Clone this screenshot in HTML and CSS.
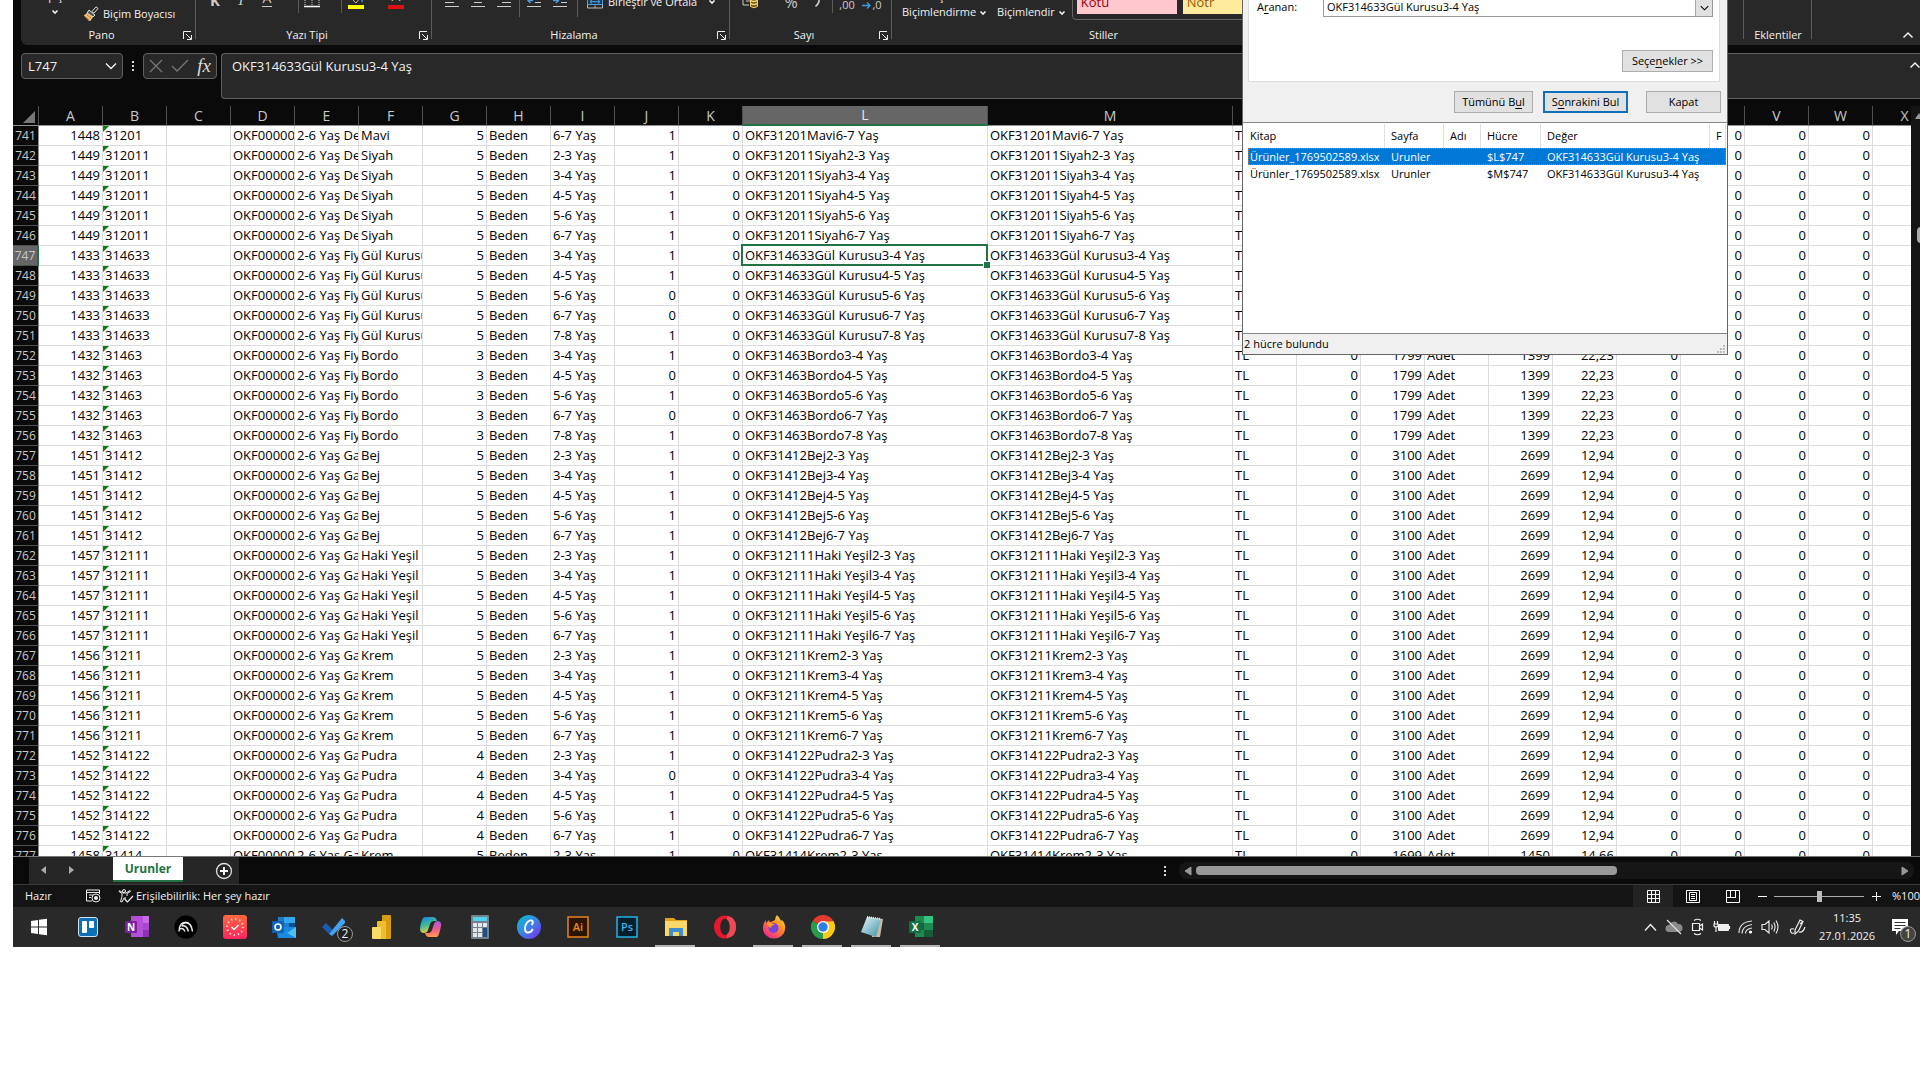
FILE: index.html
```html
<!DOCTYPE html>
<html lang="tr">
<head>
<meta charset="utf-8">
<title>Ürünler_1769502589.xlsx - Excel</title>
<link rel="stylesheet" href="styles.css">
</head>
<body>
<svg class="defs" aria-hidden="true">
  <symbol id="caret" viewBox="0 0 8 6"><path d="M1.5 1.5 4 4 6.500 1.500" fill="none" stroke="currentColor" stroke-width="1.600"/></symbol>
  <symbol id="chevron" viewBox="0 0 12 8"><path d="M1 1.500 6 6.500 11 1.500" fill="none" stroke="currentColor" stroke-width="1.400"/></symbol>
  <symbol id="chevron-up" viewBox="0 0 12 8"><path d="M1.500 6.500 6 2 10.500 6.500" fill="none" stroke="currentColor" stroke-width="1.500"/></symbol>
  <symbol id="launcher" viewBox="0 0 9 9"><path d="M.5 8V.5H8M3 3l5 5M8.500 4v4.500H4" fill="none" stroke="currentColor"/></symbol>
</svg>
<div class="desktop">
  <main class="excel">
    <div class="ribbon">
      <section class="group group-clipboard">
        <div class="tools">
          <button class="paste">Yapıştır<svg class="caret"><use href="#caret"/></svg></button>
          <button class="painter">
            <svg width="16" height="16" viewBox="0 0 16 16"><path d="M9 5.500 13 .8l2 1.700-4 4.700z" fill="none" stroke="#ddd"/><path d="m6 4 6 5-2 2-6-4z" fill="#555" stroke="#ddd"/><path d="M4 7 .8 9.500 6 15l1.500-.3L10 11z" fill="#f3c27a"/><path d="M2 10.500 6.500 14M4 9l4 3" stroke="#b87a2c"/></svg>
            Biçim Boyacısı</button>
        </div>
        <footer class="group-label with-launch">Pano<button class="launch" aria-label="Pano ayarları"><svg><use href="#launcher"/></svg></button></footer>
      </section>
      <section class="group group-font">
        <div class="tools">
          <button class="t26 bold">K</button><button class="t26 italic">T</button><button class="t26 under"><span>A</span></button>
          <button class="t14" aria-label="Alt çizgi türü"><svg class="caret"><use href="#caret"/></svg></button>
          <i class="sep s8"></i>
          <button class="t20" aria-label="Kenarlık"><svg width="16" height="20" viewBox="0 0 16 20"><path d="M1 2v15M15 2v15M8 2v15M1 11h14" stroke="#ccc" stroke-dasharray="1 1" fill="none"/><path d="M0 18.500h16" stroke="#fff" stroke-width="1.500"/></svg></button>
          <button class="t16" aria-label="Kenarlık türü"><svg class="caret"><use href="#caret"/></svg></button>
          <i class="sep s6"></i>
          <button class="t24" aria-label="Dolgu rengi"><svg width="16" height="22" viewBox="0 0 16 22"><path d="m3 11 5-6 5 5-5 6z" fill="none" stroke="#bbb"/><path d="M12 8q3 2 2 7" stroke="#4a90c8" stroke-width="1.500" fill="none"/><path d="M0 18h16v4H0z" fill="#ff0"/></svg></button>
          <button class="t16" aria-label="Dolgu renkleri"><svg class="caret"><use href="#caret"/></svg></button>
          <button class="t24 fontcolor"><span>A</span></button>
          <button class="t16" aria-label="Yazı renkleri"><svg class="caret"><use href="#caret"/></svg></button>
        </div>
        <footer class="group-label with-launch">Yazı Tipi<button class="launch" aria-label="Yazı tipi ayarları"><svg><use href="#launcher"/></svg></button></footer>
      </section>
      <section class="group group-align">
        <div class="tools low">
          <button class="t26" aria-label="Sola hizala"><svg width="14" height="16" viewBox="0 0 14 16"><path d="M0 4.500h14M0 8.500h9M0 12.500h14" stroke="#ccc"/></svg></button>
          <button class="t26" aria-label="Ortala"><svg width="14" height="16" viewBox="0 0 14 16"><path d="M0 4.500h14M3 8.500h8M0 12.500h14" stroke="#ccc"/></svg></button>
          <button class="t26" aria-label="Sağa hizala"><svg width="14" height="16" viewBox="0 0 14 16"><path d="M0 4.500h14M5 8.500h9M0 12.500h14" stroke="#ccc"/></svg></button>
          <i class="sep s4"></i>
          <button class="t26" aria-label="Girintiyi azalt"><svg width="14" height="16" viewBox="0 0 14 16"><path d="M8 4.500h6M8 8.500h6M0 12.500h14" stroke="#ccc"/><path d="M6 6.500H1M3.500 4 1 6.500 3.500 9" stroke="#4aa0dc" stroke-width="1.400" fill="none"/></svg></button>
          <button class="t26" aria-label="Girintiyi artır"><svg width="14" height="16" viewBox="0 0 14 16"><path d="M8 4.500h6M8 8.500h6M0 12.500h14" stroke="#ccc"/><path d="M0 6.500h5M3 4l2.500 2.500L3 9" stroke="#4aa0dc" stroke-width="1.400" fill="none"/></svg></button>
          <i class="sep s8"></i>
          <button class="merge"><svg width="16" height="14" viewBox="0 0 16 14"><path d="M.5.5h15v12.500H.5zM8 0v3M8 10.500V13" fill="none" stroke="#bbb"/><path d="M.5 4h15v5.500H.5z" fill="#1c3a50" stroke="#4aa0dc"/><path d="M3 6.700h10M5 5 3 6.700 5 8.500M11 5l2 1.700-2 1.800" fill="none" stroke="#4aa0dc"/></svg>Birleştir ve Ortala<svg class="caret"><use href="#caret"/></svg></button>
        </div>
        <footer class="group-label with-launch">Hizalama<button class="launch" aria-label="Hizalama ayarları"><svg><use href="#launcher"/></svg></button></footer>
      </section>
      <section class="group group-number">
        <div class="tools">
          <button class="t24" aria-label="Para birimi"><svg width="16" height="22" viewBox="0 0 16 22"><path d="M1 4v14h6M4 14h4" stroke="#ccc" fill="none"/><path d="M8.500 10h7v9.500q-3.500 2.500-7 0z" fill="#6b5420" stroke="#f5cf6b"/><path d="M8.500 13.500q3.500 2 7 0M8.500 16.500q3.500 2 7 0" stroke="#f5cf6b" stroke-width="1.500" fill="none"/></svg></button>
          <button class="t16" aria-label="Para birimleri"><svg class="caret"><use href="#caret"/></svg></button>
          <button class="t26 sign">%</button>
          <button class="t26 sign" aria-label="Virgül stili"><svg width="8" height="14" viewBox="0 0 8 14"><path d="M5 2.500q3 4-2.500 9" fill="none" stroke="#ccc" stroke-width="1.600"/></svg></button>
          <i class="sep s4"></i>
          <button class="t26 decimal">,00</button>
          <button class="t24 decimal"><svg width="10" height="9" viewBox="0 0 10 9"><path d="M0 4.500h8M5 1.500l3 3-3 3" fill="none" stroke="#3f9be0" stroke-width="1.400"/></svg>,0</button>
        </div>
        <footer class="group-label with-launch">Sayı<button class="launch" aria-label="Sayı ayarları"><svg><use href="#launcher"/></svg></button></footer>
      </section>
      <section class="group group-styles">
        <div class="tools">
          <button class="style-menu">Koşullu<br>Biçimlendirme <svg class="caret"><use href="#caret"/></svg></button>
          <button class="style-menu">Tablo Olarak<br>Biçimlendir <svg class="caret"><use href="#caret"/></svg></button>
          <div class="gallery"><button class="bad">Kötü</button><button class="neutral">Nötr</button></div>
        </div>
        <footer class="group-label">Stiller</footer>
      </section>
      <section class="group group-addins"><footer class="group-label">Eklentiler</footer></section>
      <button class="collapse" aria-label="Şeridi daralt"><svg><use href="#chevron-up"/></svg></button>
    </div>

    <div class="formula-row">
      <div class="namebox"><input aria-label="Ad kutusu" value="L747"><svg><use href="#chevron"/></svg></div>
      <span class="dots"><i></i><i></i><i></i></span>
      <div class="fx">
        <button aria-label="İptal"><svg width="14" height="14" viewBox="0 0 14 14"><path d="m1 1 12 12M13 1 1 13" stroke="#777" stroke-width="1.300"/></svg></button>
        <button aria-label="Gir"><svg width="18" height="14" viewBox="0 0 18 14"><path d="m1 7 5 5L17 1" stroke="#777" stroke-width="1.300" fill="none"/></svg></button>
        <button class="fx-sign">fx</button>
      </div>
      <div class="formula"><input aria-label="Formül çubuğu" value="OKF314633Gül Kurusu3-4 Yaş"><svg><use href="#chevron-up"/></svg></div>
    </div>

    <div class="sheet">
      <div class="grid">
        <table class="cells">
          <colgroup><col class="c-head"><col span="11" class="c-std"><col span="2" class="c-wide"><col span="11" class="c-std"></colgroup>
          <thead><tr id="letters"><th class="corner"><svg width="12" height="12" viewBox="0 0 12 12"><path d="M12 0v12H0z" fill="#777"/></svg></th></tr></thead>
          <tbody id="rows"></tbody>
        </table>
      </div>
      <div class="vscroll"><svg width="8" height="6" viewBox="0 0 8 6"><path d="M4 0 8 6H0z" fill="#999"/></svg><i></i></div>
    </div>

    <div class="tabbar">
      <nav class="tabs">
        <button class="nav-arrow" aria-label="Önceki sayfa"><svg width="5" height="8" viewBox="0 0 5 8"><path d="M5 0v8L0 4z" fill="#aaa"/></svg></button>
        <button class="nav-arrow" aria-label="Sonraki sayfa"><svg width="5" height="8" viewBox="0 0 5 8"><path d="M0 0v8l5-4z" fill="#aaa"/></svg></button>
        <button class="tab">Urunler</button>
        <button class="add" aria-label="Yeni sayfa"><svg width="18" height="18" viewBox="0 0 18 18"><circle cx="9" cy="9" r="7.500" fill="none" stroke="#ddd" stroke-width="1.300"/><path d="M9 5v8M5 9h8" stroke="#fff" stroke-width="1.800"/></svg></button>
      </nav>
      <span class="dots small"><i></i><i></i><i></i></span>
      <div class="hscroll">
        <svg width="8" height="10" viewBox="0 0 8 10"><path d="M7 1v8L1 5z" fill="#999" stroke="#999"/></svg>
        <div class="track"><i></i></div>
        <svg width="8" height="10" viewBox="0 0 8 10"><path d="M1 1v8l6-4z" fill="#999" stroke="#999"/></svg>
      </div>
    </div>

    <div class="status">
      <span class="ready">Hazır</span>
      <svg class="macro" width="15" height="14" viewBox="0 0 15 14"><path d="M.5 1h13M.5 3.500h13M.5 1v11H6M13.500 1v4M3 6h4M3 8.500h2" stroke="#eee" fill="none"/><circle cx="10" cy="9" r="4" fill="none" stroke="#eee"/><circle cx="10" cy="9" r="2" fill="#eee"/></svg>
      <svg width="16" height="14" viewBox="0 0 16 14"><circle cx="6" cy="2" r="1.500" fill="none" stroke="#eee"/><path d="M1 2.500 4 4.500v3L2.500 12.500l1.500.5L6 9M1 2.500 1.500 1.500 5 4h3l4-2.500.500 1L9 4.500V7" fill="none" stroke="#eee"/><path d="m7 10.500 2.500 2.500L15 7M7 8v3" fill="none" stroke="#eee" stroke-width="1.200"/></svg>
      <span class="access">Erişilebilirlik: Her şey hazır</span>
      <div class="views">
        <button class="current" aria-label="Normal"><svg width="13" height="13" viewBox="0 0 13 13"><path d="M.5.500h12v12H.5zM4.500 0v13M8.500 0v13M0 4.500h13M0 8.500h13" fill="none" stroke="#fff"/></svg></button>
        <button aria-label="Sayfa düzeni"><svg width="14" height="13" viewBox="0 0 14 13"><path d="M.5.500h13v12H.5zM3.500 2.500h7v8h-7zM5 4.500h4M5 6.500h4M5 8.500h4" fill="none" stroke="#fff"/></svg></button>
        <button aria-label="Sayfa sonu önizleme"><svg width="14" height="13" viewBox="0 0 14 13"><path d="M.5.500h13v12H.5zM4.500 0v7.500M9.500 0v7.500M0 7.500h10" fill="none" stroke="#fff"/></svg></button>
      </div>
      <div class="zoom">
        <button aria-label="Uzaklaştır"><svg width="9" height="9" viewBox="0 0 9 9"><path d="M0 4.500h9" stroke="#fff"/></svg></button>
        <input type="range" aria-label="Yakınlaştırma" min="0" max="200" value="100">
        <button aria-label="Yakınlaştır"><svg width="9" height="9" viewBox="0 0 9 9"><path d="M0 4.500h9M4.500 0v9" stroke="#fff"/></svg></button>
        <span>%100</span>
      </div>
    </div>
  </main>

  <nav class="taskbar">
    <div class="apps">
      <button aria-label="Başlat"><svg viewBox="0 0 24 24"><path d="m4 6 7-1v6.500H4zM12 4.800 20 3.700v7.800h-8zM4 12.500h7V19l-7-1zM12 12.500h8v7.800l-8-1.100z" fill="#fff"/></svg></button>
      <button aria-label="Trello"><svg viewBox="0 0 24 24"><rect x="2.500" y="2.500" width="19" height="19" rx="2.500" fill="#0b6fb8" stroke="#cfe6f5"/><rect x="6" y="6" width="5" height="12" rx="1" fill="#fff"/><rect x="13" y="6" width="5" height="7" rx="1" fill="#fff"/></svg></button>
      <button aria-label="OneNote"><svg viewBox="0 0 24 24"><path d="M6 1h18v21H6z" fill="#b44fd8"/><path d="M18 1h6v7h-6z" fill="#c86ae6"/><path d="M18 8h6v7h-6z" fill="#a946cf"/><path d="M18 15h6v7h-6z" fill="#8c30b4"/><rect y="6" width="12" height="12" rx="1" fill="#7a1fa2"/><text x="6" y="15.500" class="i-n">N</text></svg></button>
      <button aria-label="NN"><svg viewBox="0 0 24 24"><circle cx="12" cy="12" r="11.500" fill="#000"/><g fill="none" stroke="#eee" stroke-width="1.500"><path d="M5 16.500C5 10 8 7 12 7.500S18 12 18.500 16.500"/><path d="M7.500 11q5-1.500 7 5.500M6 14q3-1.500 5 2.500M8 9.500q3-3 6.500-1.500"/></g></svg></button>
      <button aria-label="Saat"><svg viewBox="0 0 24 24"><defs><linearGradient id="g1" x2="0" y2="1"><stop stop-color="#ff6a3c"/><stop offset="1" stop-color="#ff2463"/></linearGradient></defs><rect width="24" height="24" rx="3" fill="url(#g1)"/><circle cx="12" cy="12" r="8" fill="none" stroke="#ffe6dd" stroke-width="2" stroke-dasharray="1.200 2.990"/><path d="m8.500 12 2.500 2.500 4.500-4.500" fill="none" stroke="#fff" stroke-width="1.400"/></svg></button>
      <button aria-label="Outlook"><svg viewBox="0 0 24 24"><path d="M6 2h17v12H6z" fill="#1b7fd0"/><path d="M12 2h11v6H12z" fill="#35a8ea"/><path d="M17 8h6v6h-6z" fill="#0f4f92"/><path d="M4 12h20v11H6z" fill="#1a8ae0"/><path d="m24 12-9 6 9 5z" fill="#4cc2f1"/><rect y="6" width="12" height="12" rx="1" fill="#0f62b5"/><circle cx="6" cy="12" r="3" fill="none" stroke="#fff" stroke-width="1.600"/></svg></button>
      <button class="todo" aria-label="To Do"><svg viewBox="0 0 24 24"><path d="m1 12 4-4 7 7-4 4z" fill="#1c5bb5"/><path d="m8 19 13-16 4 4L11 21z" fill="#45a2f0"/></svg><span class="badge">2</span></button>
      <button aria-label="Power BI"><svg viewBox="0 0 24 24"><rect x="12" y="0" width="9" height="24" rx="1" fill="#d89b12"/><rect x="7" y="6" width="9" height="18" rx="1" fill="#f0bd2d"/><rect x="2" y="12" width="9" height="12" rx="1" fill="#f9dc66"/></svg></button>
      <button aria-label="Copilot"><svg viewBox="0 0 24 24"><defs><linearGradient id="g2" x2=".4" y2="1"><stop stop-color="#1a7fe8"/><stop offset=".55" stop-color="#3dbb9c"/><stop offset="1" stop-color="#f6d12e"/></linearGradient><linearGradient id="g3" x2="0" y2="1"><stop stop-color="#a35be8"/><stop offset=".5" stop-color="#ef5a8f"/><stop offset="1" stop-color="#ff9a4d"/></linearGradient></defs><path d="M6 2h8q3 0 4 4h-3q-3 0-4 3l-2 6q-1 3-4 3-4 0-4-4Q1 10 3 5q1-3 3-3z" fill="url(#g2)"/><path d="M18 22h-8q-3 0-4-4h3q3 0 4-3l2-6q1-3 4-3 4 1 3 5-1 5-2 8-1 3-2 3z" fill="url(#g3)"/></svg></button>
      <button aria-label="Hesap makinesi"><svg viewBox="0 0 24 24"><rect x="3" width="18" height="24" rx="1" fill="#74808b"/><rect x="5" y="2" width="14" height="4" fill="#52d3f2"/><path d="M5 8h4v4H5zM10 8h4v4h-4zM15 8h4v4h-4zM5 13h4v4H5zM10 13h4v4h-4zM5 18h4v4H5zM10 18h4v4h-4z" fill="#e3e8ec"/><path d="M15 13h4v9h-4z" fill="#1b4f86"/></svg></button>
      <button aria-label="Canva"><svg viewBox="0 0 24 24"><defs><linearGradient id="g4" x1="0" x2=".9" y2="1"><stop stop-color="#08c2cc"/><stop offset=".5" stop-color="#3a86e6"/><stop offset="1" stop-color="#7b2ff0"/></linearGradient></defs><circle cx="12" cy="12" r="12" fill="url(#g4)"/><path d="M15 9.500q2-3-.5-4c-3-.8-6.500 3.500-6.500 8 0 5.500 5.500 5 7.500 1" fill="none" stroke="#fff" stroke-width="1.900" stroke-linecap="round"/></svg></button>
      <button aria-label="Illustrator"><svg viewBox="0 0 24 24"><rect x="2" y="2" width="20" height="20" fill="#2a1500" stroke="#e8831c" stroke-width="1.500"/><text x="12" y="16" class="i-ai">Ai</text></svg></button>
      <button aria-label="Photoshop"><svg viewBox="0 0 24 24"><rect x="2" y="2" width="20" height="20" fill="#041e2b" stroke="#21b3e8" stroke-width="1.500"/><text x="12" y="16" class="i-ps">Ps</text></svg></button>
      <button class="open" aria-label="Dosya Gezgini"><svg viewBox="0 0 24 24"><path d="M1 3h9l2 2h11v4H1z" fill="#e0a21a"/><path d="M1 6h22v15H1z" fill="#fbd768"/><path d="M5 13h14v8h-4v-4H9v4H5z" fill="#3f8fd0"/></svg></button>
      <button aria-label="Opera"><svg viewBox="0 0 24 24"><ellipse cx="12" cy="12" rx="11" ry="11.500" fill="#e5182d"/><path d="M14 1q9 1 9 11t-9 11z" fill="#ee4a55"/><ellipse cx="12" cy="12" rx="4.800" ry="8.300" fill="#282828"/></svg></button>
      <button class="open" aria-label="Firefox"><svg viewBox="0 0 24 24"><defs><linearGradient id="g5" x1="1" x2=".2" y2="1"><stop stop-color="#fff04a"/><stop offset=".45" stop-color="#ff8a20"/><stop offset="1" stop-color="#f0209a"/></linearGradient></defs><path d="M15 0q3 3 4 6l1-1q4 4 3 9a11 10 0 0 1-22-1Q1 8 4 5v3l3-3q0 2 2 2l4-2q0-3 2-5z" fill="url(#g5)"/><circle cx="11.500" cy="13" r="5" fill="#7a42e0"/><path d="M5 8q4-1 8 2-4 0-4 3-3-1-4-5z" fill="#ff9b2c"/></svg></button>
      <button class="open" aria-label="Chrome"><svg viewBox="0 0 24 24"><path d="M12 12 1.600 6A12 12 0 0 1 22.400 6z" fill="#e33b2e"/><path d="M12 12 22.400 6A12 12 0 0 1 12 24z" fill="#fbc916"/><path d="M12 12v12A12 12 0 0 1 1.600 6z" fill="#2a9d4a"/><path d="M12 6.500h10.700l.2 1L17 14.500z" fill="#fbc916"/><circle cx="12" cy="12" r="6" fill="#fff"/><circle cx="12" cy="12" r="4.700" fill="#2f7de8"/></svg></button>
      <button class="open" aria-label="Not Defteri"><svg viewBox="0 0 24 24"><defs><linearGradient id="g6" x2="1" y2="1"><stop stop-color="#e4f6f8"/><stop offset="1" stop-color="#3d8ea3"/></linearGradient></defs><path d="m8 2 15 2-3 18-8 0z" fill="#c9b9a2"/><path d="m7 2 14 2-5 18L1 17z" fill="url(#g6)"/><path d="m7 2 14 2" stroke="#eee" stroke-width="2" stroke-dasharray="1 1"/></svg></button>
      <button class="open" aria-label="Excel"><svg viewBox="0 0 24 24"><path d="M6 1h18v21H6z" fill="#1c8a51"/><path d="M15 1h9v7h-9z" fill="#37c481"/><path d="M15 15h9v7h-9z" fill="#155c38"/><path d="M6 8h9v7H6z" fill="#17653c"/><rect y="6" width="12" height="12" rx="1" fill="#107040"/><text x="6" y="15.500" class="i-n">X</text></svg></button>
    </div>
    <div class="tray">
      <button aria-label="Gizli simgeler"><svg width="13" height="9" viewBox="0 0 13 9"><path d="m1 7.500 5.500-6 5.500 6" fill="none" stroke="#eee" stroke-width="1.400"/></svg></button>
      <button aria-label="OneDrive"><svg width="18" height="16" viewBox="0 0 18 16"><path d="M4 13a3.500 3.500 0 0 1 0-7 5 5 0 0 1 9-1 4 4 0 0 1 1 8z" fill="#8a8a8a"/><path d="m2 1 14 14" stroke="#ddd" stroke-width="1.300"/></svg></button>
      <button aria-label="Kamera"><svg width="14" height="18" viewBox="0 0 14 18"><path d="M1.500 5.500h7v7h-7zM8.500 8l3-2v6l-3-2M3 2.500Q6.500 0 10 2.500M3 15.500q3.500 2.500 7 0" fill="none" stroke="#eee" stroke-width="1.200"/></svg></button>
      <button aria-label="Pil"><svg width="18" height="14" viewBox="0 0 18 14"><path d="M5.500 4.500h10v6h-10z" fill="#eee" stroke="#eee"/><path d="M16.500 6v3M1.500 1v3M4.500 1v3M1 4h4v2q-2 2-4 0zM3 7v5" stroke="#eee" fill="none" stroke-width="1.200"/></svg></button>
      <button aria-label="Ağ"><svg width="16" height="16" viewBox="0 0 16 16"><path d="M1 14Q1 3 14 2M4 14.500Q4 7 14 5.500M7.500 14.500Q7.500 10 14 9" fill="none" stroke="#ddd" stroke-width="1.200"/><circle cx="12.500" cy="13" r="1.600" fill="#fff"/></svg></button>
      <button aria-label="Ses"><svg width="18" height="16" viewBox="0 0 18 16"><path d="M1 5.500h3L8 2v12l-4-3.500H1zM10.500 5.500q1.500 2.500 0 5M12.800 3.500q2.500 4.500 0 9M15 1.500q4 6.500 0 13" fill="none" stroke="#eee" stroke-width="1.100"/></svg></button>
      <button class="pen" aria-label="Kalem"><svg width="18" height="18" viewBox="0 0 18 18"><path d="M6 12 11 2l3 1.500L9.500 13 6 16zM11 6l3-2.500M5 11q-4-1-3.500 2T5 15M10 14q4 1 6-5" fill="none" stroke="#eee" stroke-width="1.200"/></svg></button>
      <div class="clock"><time>11:35</time><time>27.01.2026</time></div>
      <button class="notes" aria-label="Bildirimler"><svg width="18" height="18" viewBox="0 0 18 18"><path d="M1 1h16v12H8l-3 4v-4H1z" fill="#fff"/><path d="M3.500 4.500h11M3.500 7.500h11M3.500 10.500h6" stroke="#333"/></svg><span class="badge">1</span></button>
    </div>
  </nav>

  <div class="dialog" role="dialog" aria-label="Bul ve Değiştir">
    <div class="panel">
      <div class="find"><label for="find">A<u>r</u>anan:</label><div class="combo"><input id="find" value="OKF314633Gül Kurusu3-4 Yaş"><button aria-label="Geçmiş"><svg><use href="#chevron"/></svg></button></div></div>
      <button class="btn options">Seçe<u>n</u>ekler &gt;&gt;</button>
    </div>
    <div class="actions"><button class="btn all">Tümünü B<u>u</u>l</button><button class="btn next">S<u>o</u>nrakini Bul</button><button class="btn close">Kapat</button></div>
    <div class="results">
      <table>
        <colgroup><col class="r1"><col class="r2"><col class="r3"><col class="r4"><col class="r5"><col></colgroup>
        <thead><tr><th>Kitap</th><th>Sayfa</th><th>Adı</th><th>Hücre</th><th>Değer</th><th>F</th></tr></thead>
        <tbody>
          <tr class="picked"><td>Ürünler_1769502589.xlsx</td><td>Urunler</td><td></td><td>$L$747</td><td>OKF314633Gül Kurusu3-4 Yaş</td><td></td></tr>
          <tr><td>Ürünler_1769502589.xlsx</td><td>Urunler</td><td></td><td>$M$747</td><td>OKF314633Gül Kurusu3-4 Yaş</td><td></td></tr>
        </tbody>
      </table>
    </div>
    <div class="found">2 hücre bulundu<svg width="9" height="9" viewBox="0 0 9 9"><path d="M6 0h2v2H6zM3 3h2v2H3zM6 3h2v2H6zM0 6h2v2H0zM3 6h2v2H3zM6 6h2v2H6z" fill="#bbb"/></svg></div>
  </div>
</div>
<script src="script.js"></script>
</body>
</html>
```

FILE: styles.css
```css
* { box-sizing: border-box; }
body { margin: 0; background: #fff; font: 12px/16px "Open Sans", "Noto Sans", sans-serif; overflow-x: hidden; }
button { margin: 0; padding: 0; border: 0; background: none; color: inherit; font: inherit; display: flex; align-items: center; justify-content: center; flex: none; }
input { margin: 0; padding: 0; border: 0; background: none; color: inherit; font: inherit; outline: 0; min-width: 0; }
svg { flex: none; display: block; }
.defs { position: absolute; width: 0; height: 0; }
.desktop { position: relative; padding-left: 13px; }
.excel { background: #0a0a0a; color: #f0f0f0; overflow: hidden; }

/* Ribbon, scrolled so that only its lower edge shows */
.ribbon { display: flex; align-items: flex-end; height: 45px; margin-left: 8px; overflow: hidden; background: #282828; border-bottom-left-radius: 6px; }
.group { position: relative; display: flex; flex-direction: column; justify-content: flex-end; flex: none; height: 75px; }
.group::after { content: ""; position: absolute; right: 0; bottom: 6px; width: 1px; height: 60px; background: #5c5c5c; }
.group-clipboard { width: 175px; }
.group-font { width: 236px; }
.group-align { width: 298px; }
.group-number { width: 162px; }
.group-styles { width: 423px; }
.group-styles::after { content: none; }
.group-addins { width: 68px; margin-left: auto; }
.group-addins::before { content: ""; position: absolute; left: -1px; bottom: 6px; width: 1px; height: 60px; background: #5c5c5c; }
.collapse { width: 108px; height: 20px; justify-content: flex-end; padding-right: 6px; }
.collapse svg { width: 12px; height: 8px; }
.group-label { display: flex; align-items: center; justify-content: center; position: relative; height: 20px; font-size: 11px; }
.with-launch { padding-right: 14px; }
.launch { position: absolute; right: 4px; top: 6px; }
.launch svg { width: 9px; height: 9px; }
.caret { width: 8px; height: 6px; }
.tools { display: flex; align-items: center; height: 30px; margin-bottom: 12px; }
.tools.low { margin-bottom: 8px; }
.group-clipboard .tools { height: 55px; margin: 0; align-items: flex-end; padding: 0 0 3px 6px; }
.paste { flex-direction: column; width: 56px; gap: 5px; padding-bottom: 7px; font-size: 11px; }
.painter { gap: 4px; height: 16px; font-size: 11px; }
.group-font .tools { padding-left: 6px; }
.group-align .tools { padding-left: 7px; }
.group-number .tools { padding-left: 8px; }
.t14 { width: 14px; } .t16 { width: 16px; } .t20 { width: 20px; } .t24 { width: 24px; } .t26 { width: 26px; }
.sep { width: 8px; height: 30px; background: linear-gradient(#5c5c5c, #5c5c5c) center / 1px 100% no-repeat; }
.s4 { width: 4px; } .s6 { width: 6px; }
.bold { padding-top: 4px; font-size: 15px; font-weight: 700; color: #ccc; }
.italic { padding-top: 4px; font: italic 15px "Liberation Serif", serif; color: #ccc; }
.under span { font-size: 14px; line-height: 16px; border-bottom: 1px solid #ccc; color: #ccc; padding: 0 1px; }
.fontcolor span { width: 16px; font-size: 14px; line-height: 18px; border-bottom: 4px solid #e01010; color: #ccc; }
.merge { gap: 5px; padding-left: 6px; font-size: 11px; }
.merge .caret { margin-left: 6px; }
.sign { padding-top: 8px; font-size: 16px; color: #ccc; }
.decimal { padding-top: 14px; font-size: 11px; color: #ccc; }
.style-menu { display: block; text-align: center; font-size: 11px; line-height: 16px; margin-left: 10px; }
.style-menu .caret { display: inline-block; }
.group-styles .tools { height: 50px; margin-bottom: 5px; align-items: flex-end; }
.gallery { display: flex; gap: 6px; align-items: flex-end; width: 240px; height: 40px; margin-left: 6px; padding: 0 4px 5px; border: 1px solid #666; border-radius: 4px; }
.gallery button { width: 100px; height: 22px; justify-content: flex-start; padding: 0 0 2px 4px; font-size: 13px; }
.bad { background: #ffc7ce; color: #9c0006; }
.neutral { background: #ffeb9c; color: #9c5700; }

/* Formula bar */
.formula-row { display: flex; align-items: flex-start; padding: 8px 0 7px 8px; }
.namebox, .fx, .formula { display: flex; background: #282828; border: 1px solid #606060; border-radius: 4px; }
.namebox { align-items: center; width: 102px; height: 26px; padding: 0 5px 0 6px; font-size: 13px; }
.namebox input { flex: 1; }
.namebox svg, .formula svg { width: 12px; height: 8px; }
.dots { display: flex; flex-direction: column; gap: 2px; width: 20px; height: 26px; align-items: center; justify-content: center; }
.dots i { width: 2px; height: 2px; background: #ddd; }
.fx { width: 74px; height: 26px; }
.fx button { width: 24px; }
.fx .fx-sign { font: italic 19px "Liberation Serif", serif; color: #ddd; }
.formula { flex: 1; height: 46px; margin-left: 4px; padding: 2px 0 0 10px; border-right: 0; border-radius: 4px 0 0 4px; }
.formula input { flex: 1; height: 20px; font-size: 13px; }
.formula svg { margin: 5px -1px 0 0; }

/* Sheet */
.sheet { display: flex; height: 751px; overflow: hidden; border-bottom: 1px solid #777; }
.grid { flex: 1; min-width: 0; overflow: hidden; }
.cells { table-layout: fixed; width: 1924px; border-collapse: separate; border-spacing: 0; background: #fff; color: #000; font: 13px/19px "Open Sans", "Noto Sans", sans-serif; }
.c-head { width: 26px; } .c-std { width: 64px; } .c-wide { width: 245px; }
.cells th { padding: 0; font-weight: 400; background: #0a0a0a; color: #c8c8c8; }
.cells thead th { height: 20px; font-size: 14px; line-height: 18px; border-right: 1px solid #505050; border-bottom: 1px solid #909090; }
.cells thead th.current { background: #666; color: #e8e8e8; border-bottom: 2px solid #217346; }
.cells .corner svg { margin: 3px 0 0 10px; }
.cells tbody th { height: 20px; border-right: 1px solid #909090; border-bottom: 1px solid #505050; font-size: 12px; }
.cells tbody th.current { background: #666; border-right: 2px solid #217346; }
.cells td { position: relative; height: 20px; padding: 0 2px; border-right: 1px solid #dcdcdc; border-bottom: 1px solid #dcdcdc; white-space: nowrap; overflow: hidden; }
.cells .num { text-align: right; }
.cells .flag::before { content: ""; position: absolute; left: 0; top: 0; border: solid transparent; border-width: 0 6px 6px 0; border-left: 0; border-top: 6px solid #107c10; border-bottom: 0; }
.cells td.active { overflow: visible; }
.active::before { content: ""; position: absolute; inset: -2px -1px -1px -2px; border: 2px solid #217346; }
.active::after { content: ""; position: absolute; right: -3px; bottom: -3px; width: 6px; height: 6px; background: #217346; border: solid #fff; border-width: 1px 0 0 1px; z-index: 1; }
.vscroll { width: 9px; background: #141414; padding: 7px 0 0 4px; }
.vscroll i { display: block; width: 8px; height: 16px; margin: 108px 0 0 2px; border-radius: 4px; background: #aaa; }

/* Sheet tabs */
.tabbar { display: flex; height: 27px; }
.tabs { display: flex; align-items: flex-start; width: 210px; margin-left: 16px; background: #262626; }
.nav-arrow { width: 28px; height: 26px; }
.tab { width: 70px; height: 25px; margin-left: 28px; background: #fff; color: #217346; font-weight: 700; border-bottom: 2px solid #217346; }
.add { width: 82px; height: 27px; }
.small { margin-left: auto; width: 28px; height: 28px; }
.hscroll { display: flex; align-items: center; justify-content: space-between; width: 735px; height: 17px; margin: 5px 6px 0 0; padding: 0 5px; background: #161616; border-radius: 8px; }
.track { flex: 1; padding: 0 4px; }
.track i { display: block; width: 60%; height: 9px; border-radius: 4px; background: #999; }

/* Status bar */
.status { display: flex; align-items: center; height: 23px; padding-left: 12px; background: #141414; border-top: 1px solid #3a3a3a; font-size: 11px; white-space: nowrap; }
.ready { width: 61px; }
.macro { margin-right: 17px; }
.access { margin-left: 2px; }
.views { display: flex; margin-left: auto; }
.views button { width: 40px; height: 22px; }
.views .current { background: #222; }
.zoom { display: flex; align-items: center; width: 167px; padding-left: 5px; overflow: hidden; }
.zoom input { appearance: none; width: 100px; height: 11px; margin: 0 8px 0 7px; background: linear-gradient(#aaa, #aaa) center / 100% 1px no-repeat; }
.zoom input::-webkit-slider-thumb { appearance: none; width: 5px; height: 11px; background: #bbb; }
.zoom span { margin-left: 11px; }

/* Taskbar */
.taskbar { display: flex; justify-content: space-between; height: 40px; background: #292929; color: #f0f0f0; overflow: hidden; }
.apps, .tray { display: flex; }
.apps { padding-left: 1px; }
.apps button { position: relative; width: 49px; }
.apps svg { width: 24px; height: 24px; }
.open::after { content: ""; position: absolute; left: 4px; right: 5px; bottom: 0; height: 2px; background: #b4b4b4; }
.i-n { font: 700 10px "Open Sans", sans-serif; fill: #fff; text-anchor: middle; }
.i-ai, .i-ps { font: 600 11px "Open Sans", sans-serif; text-anchor: middle; fill: #f08a1c; }
.i-ps { fill: #35b6ea; }
.badge { position: absolute; left: 29px; top: 19px; width: 16px; height: 16px; border: 1px solid #999; border-radius: 8px; background: #222; line-height: 14px; text-align: center; }
.tray button { width: 24px; }
.tray .pen { width: 32px; }
.clock { width: 66px; display: flex; flex-direction: column; align-items: center; justify-content: center; gap: 2px; font-size: 11px; }
.tray .notes { position: relative; width: 40px; }
.notes .badge { left: 20px; background: #444; }

/* Find dialog */
.dialog { position: absolute; left: 1242px; top: 0; width: 486px; height: 355px; display: flex; flex-direction: column; background: #f0f0f0; color: #000; border: solid #666; border-width: 0 1px 1px; font-size: 11px; }
.panel { height: 82px; margin: 0 7px 0 5px; padding: 0 6px 0 8px; background: #fff; border: 1px solid #dcdcdc; border-top: 0; display: flex; flex-direction: column; justify-content: space-between; align-items: flex-end; padding-bottom: 9px; }
.find { display: flex; width: 100%; justify-content: space-between; }
.find label { line-height: 14px; }
.combo { display: flex; width: 390px; height: 17px; border: 1px solid #999; border-top: 0; }
.combo input { flex: 1; height: 14px; padding-left: 3px; }
.combo button { width: 17px; background: #e1e1e1; border-left: 1px solid #aaa; }
.combo svg { width: 9px; height: 8px; }
.btn { height: 22px; background: #e1e1e1; border: 1px solid #adadad; }
.btn u, label u { text-underline-offset: 2px; }
.options { width: 91px; }
.actions { display: flex; justify-content: flex-end; height: 40px; padding: 9px 6px 0 0; }
.all { width: 79px; margin-right: 10px; }
.next { width: 85px; margin-right: 18px; border: 2px solid #0f6fb8; }
.close { width: 75px; }
.results { flex: 1; padding: 1px 1px 0 5px; background: #fff; border: solid #828790; border-width: 1px 0; }
.results table { width: 100%; table-layout: fixed; border-collapse: separate; border-spacing: 0; }
.results th { height: 24px; padding: 0 0 0 6px; font-weight: 400; text-align: left; border-right: 1px solid #e0e0e0; }
.results td { height: 17px; padding: 0 0 0 6px; line-height: 17px; white-space: nowrap; }
.results th:first-child, .results td:first-child { padding-left: 2px; }
.results .picked td { background: #0078d7; color: #fff; }
.picked { outline: 1px dotted #c87a3a; outline-offset: -1px; }
.r1 { width: 137px; } .r2 { width: 59px; } .r3 { width: 37px; } .r4 { width: 60px; } .r5 { width: 169px; }
.found { display: flex; justify-content: space-between; align-items: center; height: 20px; padding: 0 1px; }
.found svg { align-self: flex-end; }
```

FILE: script.js
```js
// Each block: first row, id, code, description, colour, group, sizes, stock, price, sale price, discount
const blocks = [
  [741, 1448, "31201", "De", "Mavi", 5, [6], [1]],
  [742, 1449, "312011", "De", "Siyah", 5, [2, 3, 4, 5, 6], [1, 1, 1, 1, 1]],
  [747, 1433, "314633", "Fiy", "Gül Kurusu", 5, [3, 4, 5, 6, 7], [1, 1, 0, 0, 1]],
  [752, 1432, "31463", "Fiy", "Bordo", 3, [3, 4, 5, 6, 7], [1, 0, 1, 0, 1], 1799, 1399, "22,23"],
  [757, 1451, "31412", "Ga", "Bej", 5, [2, 3, 4, 5, 6], [1, 1, 1, 1, 1], 3100, 2699, "12,94"],
  [762, 1457, "312111", "Ga", "Haki Yeşil", 5, [2, 3, 4, 5, 6], [1, 1, 1, 1, 1], 3100, 2699, "12,94"],
  [767, 1456, "31211", "Ga", "Krem", 5, [2, 3, 4, 5, 6], [1, 1, 1, 1, 1], 3100, 2699, "12,94"],
  [772, 1452, "314122", "Ga", "Pudra", 4, [2, 3, 4, 5, 6], [1, 0, 1, 1, 1], 3100, 2699, "12,94"],
  [777, 1458, "31414", "Ga", "Krem", 5, [2], [1], 1699, 1450, "14,66"]
];
const activeRow = 747;
const textColumns = "BCDEFHILMNQ";

const letters = document.getElementById("letters");
for (const letter of "ABCDEFGHIJKLMNOPQRSTUVWX") {
  const th = document.createElement("th");
  th.textContent = letter;
  if (letter === "L") th.className = "current";
  letters.append(th);
}

const body = document.getElementById("rows");
for (const [first, id, code, desc, colour, group, sizes, stock, price = "", sale = "", cut = ""] of blocks) {
  sizes.forEach((size, i) => {
    const age = `${size}-${size + 1} Yaş`;
    const sku = `OKF${code}${colour}${age}`;
    const values = [id, code, "", "OKF00000", `2-6 Yaş ${desc}`, colour, group, "Beden", age,
      stock[i], 0, sku, sku, "TL", 0, price, "Adet", sale, cut, 0, 0, 0, 0, ""];
    const tr = document.createElement("tr");
    const th = document.createElement("th");
    th.textContent = first + i;
    if (first + i === activeRow) th.className = "current";
    tr.append(th);
    values.forEach((value, c) => {
      const letter = String.fromCharCode(65 + c);
      const td = document.createElement("td");
      td.textContent = value;
      if (!textColumns.includes(letter)) td.className = "num";
      if (letter === "B") td.className = "flag";
      if (letter === "L" && first + i === activeRow) td.className = "active";
      tr.append(td);
    });
    body.append(tr);
  });
}
```
